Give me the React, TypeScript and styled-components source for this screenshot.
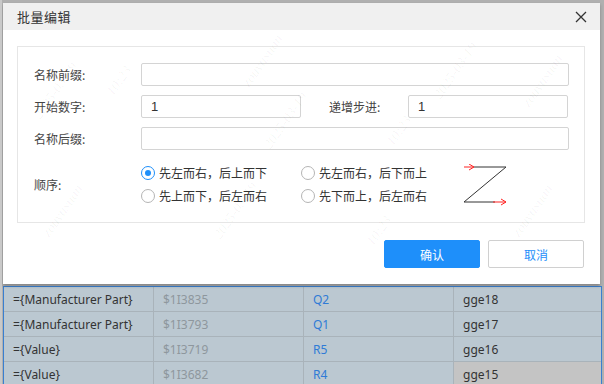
import React, { useState } from "react";
import styled, { createGlobalStyle } from "styled-components";

const GlobalStyle = createGlobalStyle`
  body {
    margin: 0;
    font-family: "Noto Sans CJK SC", "Noto Sans", sans-serif;
  }
`;

const orders = [
  "先左而右，后上而下",
  "先左而右，后下而上",
  "先上而下，后左而右",
  "先下而上，后左而右",
];

const rows = [
  { exp: "={Manufacturer Part}", id: "$1I3835", ref: "Q2", name: "gge18" },
  { exp: "={Manufacturer Part}", id: "$1I3793", ref: "Q1", name: "gge17" },
  { exp: "={Value}", id: "$1I3719", ref: "R5", name: "gge16" },
  { exp: "={Value}", id: "$1I3682", ref: "R4", name: "gge15" },
];

// faint watermark stamps inside the dialog
const marks = [
  { x: 20, y: 80, t: "2025-03-19" },
  { x: 100, y: 70, t: "10:23" },
  { x: 230, y: 50, t: "zouyuxuan" },
  { x: 420, y: 60, t: "2025-03-19" },
  { x: 510, y: 70, t: "zouyuxuan" },
  { x: 250, y: 110, t: "2025-03-19" },
  { x: 380, y: 120, t: "10:23" },
  { x: 30, y: 200, t: "zouyuxuan" },
  { x: 200, y: 200, t: "2025-03-19" },
  { x: 360, y: 220, t: "10:23" },
  { x: 500, y: 200, t: "zouyuxuan" },
];

export default function App() {
  const [order, setOrder] = useState(0);
  const [start, setStart] = useState("1");
  const [step, setStep] = useState("1");

  return (
    <Screen>
      <GlobalStyle />
      <Dialog>
        <TitleBar>
          <Title>批量编辑</Title>
          <CloseButton aria-label="close">
            <svg width="12" height="12" viewBox="0 0 12 12">
              <path d="M1 1 L11 11 M11 1 L1 11" stroke="#333" strokeWidth="1.3" />
            </svg>
          </CloseButton>
        </TitleBar>
        <DialogBody>
          <Panel>
            <FormRow>
              <Label>名称前缀:</Label>
              <Input />
            </FormRow>
            <FormRow>
              <Label>开始数字:</Label>
              <Input $w={160} value={start} onChange={(e) => setStart(e.target.value)} />
              <Label $w={79} $ml={28}>递增步进:</Label>
              <Input $w={160} value={step} onChange={(e) => setStep(e.target.value)} />
            </FormRow>
            <FormRow>
              <Label>名称后缀:</Label>
              <Input />
            </FormRow>
            <OrderRow>
              <Label>顺序:</Label>
              <RadioGrid>
                {orders.map((o, i) => (
                  <RadioItem key={o} onClick={() => setOrder(i)}>
                    <RadioCircle $checked={order === i} />
                    {o}
                  </RadioItem>
                ))}
              </RadioGrid>
              <ZIcon width="50" height="42" viewBox="0 0 50 42">
                <path d="M12 3 H44 L2 38 H33" fill="none" stroke="#333" strokeWidth="1" />
                <path d="M2 3 H12" stroke="#f22" strokeWidth="1" />
                <path d="M7 0 L12 3 L7 6" fill="none" stroke="#f22" strokeWidth="1" />
                <path d="M31 38 H44" stroke="#f22" strokeWidth="1" />
                <path d="M39 35 L44 38 L39 41" fill="none" stroke="#f22" strokeWidth="1" />
              </ZIcon>
            </OrderRow>
          </Panel>
          <Footer>
            <Button $primary>确认</Button>
            <Button>取消</Button>
          </Footer>
        </DialogBody>
        <Watermarks>
          {marks.map((m, i) => (
            <Mark key={i} style={{ left: m.x, top: m.y }}>
              {m.t}
            </Mark>
          ))}
        </Watermarks>
      </Dialog>
      <Table>
        {rows.map((r, i) => (
          <TableRow key={r.name} $first={i === 0}>
            <Cell>{r.exp}</Cell>
            <Cell $tone="muted">{r.id}</Cell>
            <Cell $tone="link">{r.ref}</Cell>
            <Cell $grey={i === rows.length - 1}>{r.name}</Cell>
          </TableRow>
        ))}
      </Table>
    </Screen>
  );
}

const Screen = styled.div`
  width: 604px;
  height: 384px;
  overflow: hidden;
  background: #b0b0b0;
  box-sizing: border-box;
  padding-top: 3px;
  border-left: 2px solid #c9c9c9;
`;

const Dialog = styled.div`
  position: relative;
  margin-left: 1px;
  width: 597px;
  height: 281px;
  background: #fff;
  box-shadow: 0 2px 3px rgba(0, 0, 0, 0.25);
  display: flex;
  flex-direction: column;
  overflow: hidden;
  z-index: 1;
`;

const TitleBar = styled.div`
  height: 27px;
  background: #f0f0f0;
  display: flex;
  align-items: center;
  justify-content: space-between;
  padding: 0 13px 0 14px;
`;

const Title = styled.div`
  font-size: 13px;
  color: #333;
  letter-spacing: 0.5px;
`;

const CloseButton = styled.div`
  width: 12px;
  height: 12px;
  display: flex;
  margin-top: 1px;
`;

const DialogBody = styled.div`
  padding: 16px 15px 0 14px;
`;

const Panel = styled.div`
  height: 177px;
  box-sizing: border-box;
  border: 1px solid #e6e6e6;
  padding: 16px 15px 0 16px;
  display: flex;
  flex-direction: column;
  gap: 9px;
`;

const FormRow = styled.div`
  display: flex;
  align-items: center;
  height: 23px;
`;

const Label = styled.div<{ $w?: number; $ml?: number }>`
  width: ${(p) => p.$w ?? 107}px;
  margin-left: ${(p) => p.$ml ?? 0}px;
  flex-shrink: 0;
  font-size: 12px;
  color: #444;
`;

const Input = styled.input<{ $w?: number }>`
  width: ${(p) => (p.$w ? `${p.$w}px` : "auto")};
  flex: ${(p) => (p.$w ? "none" : "1")};
  height: 23px;
  box-sizing: border-box;
  border: 1px solid #d4d4d4;
  border-radius: 2px;
  padding: 0 9px;
  font-family: "Liberation Sans", "Noto Sans", sans-serif;
  font-size: 13px;
  color: #333;
  outline: none;
`;

const OrderRow = styled.div`
  display: flex;
  align-items: center;
  margin-top: 3px;
`;

const RadioGrid = styled.div`
  display: grid;
  grid-template-columns: 160px 160px;
  row-gap: 3px;
`;

const RadioItem = styled.label`
  display: flex;
  align-items: center;
  gap: 4px;
  height: 20px;
  font-size: 12px;
  color: #333;
  cursor: pointer;
`;

const RadioCircle = styled.span<{ $checked?: boolean }>`
  width: 14px;
  height: 14px;
  box-sizing: border-box;
  border-radius: 50%;
  border: 1px solid ${(p) => (p.$checked ? "#1e8ffa" : "#b5b5b5")};
  display: flex;
  align-items: center;
  justify-content: center;
  &::after {
    content: "";
    width: 6px;
    height: 6px;
    border-radius: 50%;
    background: ${(p) => (p.$checked ? "#1e8ffa" : "transparent")};
  }
`;

const ZIcon = styled.svg`
  margin-left: 1px;
  margin-top: 2px;
`;

const Footer = styled.div`
  display: flex;
  justify-content: flex-end;
  gap: 8px;
  margin-top: 17px;
  padding-right: 1px;
`;

const Button = styled.button<{ $primary?: boolean }>`
  width: 96px;
  height: 28px;
  border-radius: 2px;
  font-family: "Noto Sans CJK SC", sans-serif;
  font-size: 12px;
  cursor: pointer;
  border: 1px solid ${(p) => (p.$primary ? "#1e8ffa" : "#d0d0d0")};
  background: ${(p) => (p.$primary ? "#1e8ffa" : "#fff")};
  color: ${(p) => (p.$primary ? "#fff" : "#1e8ffa")};
`;

const Watermarks = styled.div`
  position: absolute;
  inset: 0;
  pointer-events: none;
`;

const Mark = styled.div`
  position: absolute;
  transform: rotate(-55deg);
  font-family: "Liberation Serif", serif;
  font-style: italic;
  font-size: 14px;
  color: rgba(0, 0, 0, 0.045);
  white-space: nowrap;
`;

const Table = styled.div`
  margin: 2px 0 0 1px;
  width: 599px;
  border-left: 1px solid #3a7fd0;
  border-right: 1px solid #3a7fd0;
  box-sizing: border-box;
  background: #bbc8d1;
`;

const TableRow = styled.div<{ $first?: boolean }>`
  display: grid;
  grid-template-columns: 150px 150px 150px 1fr;
  height: 25px;
  box-sizing: border-box;
  border-top: 1px solid ${(p) => (p.$first ? "#3a7fd0" : "#a9b3ba")};
`;

const Cell = styled.div<{ $tone?: "muted" | "link"; $grey?: boolean }>`
  display: flex;
  align-items: center;
  padding-left: 9px;
  border-right: 1px solid #a9b3ba;
  background: ${(p) => (p.$grey ? "#c4c4c4" : "transparent")};
  font-family: "Noto Sans", sans-serif;
  font-size: 12px;
  color: ${(p) => (p.$tone === "muted" ? "#8e979d" : p.$tone === "link" ? "#2f7bd6" : "#333")};
  &:last-child {
    border-right: none;
  }
`;
